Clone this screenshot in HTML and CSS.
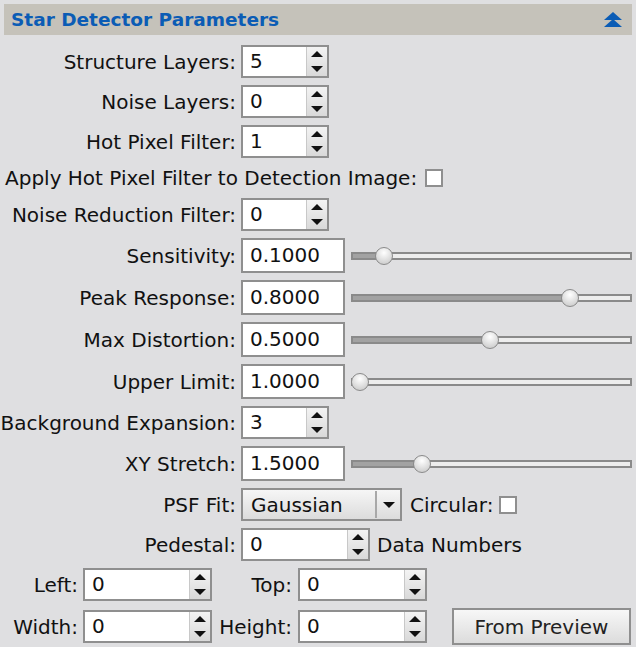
FILE: index.html
```html
<!DOCTYPE html>
<html>
<head>
<meta charset="utf-8">
<link rel="stylesheet" href="styles.css">
</head>
<body>
<div class="panel">
  <div class="header">
    <span class="title">Star Detector Parameters</span>
    <svg class="collapse" width="18" height="16" viewBox="0 0 18 16"><path d="M9 0 L18 8 L0 8 Z M9 7 L18 15 L0 15 Z" fill="#0b5cb5"/></svg>
  </div>
  <div class="form">
    <div class="row">
      <span class="lbl">Structure Layers:</span>
      <div class="spin s88"><span class="val">5</span><span class="arrows"><i class="up"></i><i class="dn"></i></span></div>
    </div>
    <div class="row">
      <span class="lbl">Noise Layers:</span>
      <div class="spin s88"><span class="val">0</span><span class="arrows"><i class="up"></i><i class="dn"></i></span></div>
    </div>
    <div class="row">
      <span class="lbl">Hot Pixel Filter:</span>
      <div class="spin s88"><span class="val">1</span><span class="arrows"><i class="up"></i><i class="dn"></i></span></div>
    </div>
    <div class="row row-check">
      <span class="lbl-free">Apply Hot Pixel Filter to Detection Image:</span>
      <span class="check"></span>
    </div>
    <div class="row">
      <span class="lbl">Noise Reduction Filter:</span>
      <div class="spin s88"><span class="val">0</span><span class="arrows"><i class="up"></i><i class="dn"></i></span></div>
    </div>
    <div class="row row-edit">
      <span class="lbl">Sensitivity:</span>
      <div class="edit">0.1000</div>
      <div class="slider"><div class="fill" style="width: 33px"></div><div class="thumb" style="left: 24px"></div></div>
    </div>
    <div class="row row-edit">
      <span class="lbl">Peak Response:</span>
      <div class="edit">0.8000</div>
      <div class="slider"><div class="fill" style="width: 219px"></div><div class="thumb" style="left: 210px"></div></div>
    </div>
    <div class="row row-edit">
      <span class="lbl">Max Distortion:</span>
      <div class="edit">0.5000</div>
      <div class="slider"><div class="fill" style="width: 139px"></div><div class="thumb" style="left: 130px"></div></div>
    </div>
    <div class="row row-edit">
      <span class="lbl">Upper Limit:</span>
      <div class="edit">1.0000</div>
      <div class="slider"><div class="fill" style="width: 9px"></div><div class="thumb" style="left: 0px"></div></div>
    </div>
    <div class="row">
      <span class="lbl">Background Expansion:</span>
      <div class="spin s88"><span class="val">3</span><span class="arrows"><i class="up"></i><i class="dn"></i></span></div>
    </div>
    <div class="row row-edit">
      <span class="lbl">XY Stretch:</span>
      <div class="edit">1.5000</div>
      <div class="slider"><div class="fill" style="width: 71px"></div><div class="thumb" style="left: 62px"></div></div>
    </div>
    <div class="row">
      <span class="lbl">PSF Fit:</span>
      <div class="combo"><span class="combo-text">Gaussian</span><span class="combo-btn"><i class="dn"></i></span></div>
      <span class="after">Circular:</span>
      <span class="check"></span>
    </div>
    <div class="row">
      <span class="lbl">Pedestal:</span>
      <div class="spin s129"><span class="val">0</span><span class="arrows"><i class="up"></i><i class="dn"></i></span></div>
      <span class="after2">Data Numbers</span>
    </div>
    <div class="row">
      <span class="lbl-a">Left:</span>
      <div class="spin s129"><span class="val">0</span><span class="arrows"><i class="up"></i><i class="dn"></i></span></div>
      <span class="lbl-b">Top:</span>
      <div class="spin s129"><span class="val">0</span><span class="arrows"><i class="up"></i><i class="dn"></i></span></div>
    </div>
    <div class="row row-last">
      <span class="lbl-a">Width:</span>
      <div class="spin s129"><span class="val">0</span><span class="arrows"><i class="up"></i><i class="dn"></i></span></div>
      <span class="lbl-b">Height:</span>
      <div class="spin s129"><span class="val">0</span><span class="arrows"><i class="up"></i><i class="dn"></i></span></div>
      <div class="button">From Preview</div>
    </div>
  </div>
</div>
</body>
</html>
```

FILE: styles.css
```css
html, body {
  margin: 0;
  padding: 0;
  background: #dfdfe1;
}
body {
  font-family: "DejaVu Sans", "Open Sans", sans-serif;
  font-size: 20px;
  color: #111;
  width: 636px;
  height: 647px;
  overflow: hidden;
}
.panel {
  padding: 4px 4px 0 4px;
}
.header {
  height: 31px;
  background: #c5c2ba;
  display: flex;
  align-items: center;
  justify-content: space-between;
  padding: 0 10px 0 7px;
}
.title {
  color: #0b5cb5;
  font-weight: bold;
  font-size: 18.5px;
}
.collapse {
  display: block;
}
.form {
  margin-left: -4px;
  margin-right: -4px;
  padding-top: 10px;
  display: flex;
  flex-direction: column;
  gap: 7px;
}
.row {
  display: flex;
  align-items: center;
  height: 33px;
}
.row-edit {
  height: 35px;
}
.row-check {
  height: 26px;
}
.row-last {
  height: 37px;
}
.lbl {
  width: 236px;
  text-align: right;
  margin-right: 5px;
  white-space: nowrap;
}
.lbl-free {
  margin-left: 5px;
  margin-right: 8px;
  white-space: nowrap;
}
.lbl-a {
  width: 78px;
  text-align: right;
  margin-right: 5px;
}
.lbl-b {
  width: 80px;
  text-align: right;
  margin-right: 6px;
}
.spin {
  box-sizing: border-box;
  height: 33px;
  border: 2px solid #8f8f8f;
  background: #fff;
  display: flex;
}
.s88 { width: 88px; }
.s129 { width: 129px; }
.val {
  flex: 1;
  padding-left: 7px;
  line-height: 29px;
}
.arrows {
  width: 20px;
  display: flex;
  flex-direction: column;
  background: linear-gradient(#f3f3f3, #d9d9d9);
  border-left: 1px solid #c8c8c8;
}
.arrows i {
  flex: 1;
  display: flex;
  align-items: center;
  justify-content: center;
}
.up::before {
  content: "";
  border-left: 6px solid transparent;
  border-right: 6px solid transparent;
  border-bottom: 6px solid #111;
}
.dn::before {
  content: "";
  border-left: 6px solid transparent;
  border-right: 6px solid transparent;
  border-top: 6px solid #111;
}
.edit {
  box-sizing: border-box;
  width: 104px;
  height: 35px;
  border: 2px solid #8f8f8f;
  background: #fff;
  padding-left: 7px;
  line-height: 31px;
}
.slider {
  position: relative;
  box-sizing: border-box;
  margin-left: 6px;
  width: 281px;
  height: 8px;
  border: 2px solid #8a8a8a;
  background: #ededed;
}
.fill {
  height: 100%;
  background: #a2a2a2;
}
.thumb {
  position: absolute;
  top: -7px;
  width: 16px;
  height: 16px;
  margin-left: -2px;
  border: 1px solid #8a8a8a;
  border-radius: 50%;
  background: radial-gradient(circle at 50% 30%, #ffffff, #d2d2d2 75%);
}
.check {
  box-sizing: border-box;
  width: 18px;
  height: 18px;
  border: 2px solid #8f8f8f;
  background: #fff;
}
.combo {
  box-sizing: border-box;
  width: 161px;
  height: 33px;
  border: 2px solid #8f8f8f;
  background: linear-gradient(#f6f6f6, #dcdcdc);
  display: flex;
  align-items: center;
}
.combo-text {
  flex: 1;
  padding-left: 8px;
}
.combo-btn {
  width: 23px;
  height: 27px;
  border-left: 2px solid #a8a8a8;
  display: flex;
  align-items: center;
  justify-content: center;
}
.combo-btn .dn {
  display: flex;
}
.after {
  margin-left: 8px;
  margin-right: 6px;
}
.after2 {
  margin-left: 7px;
}
.button {
  box-sizing: border-box;
  margin-left: 25px;
  width: 179px;
  height: 37px;
  border: 2px solid #8f8f8f;
  background: linear-gradient(#f7f7f7, #dcdcdc);
  display: flex;
  align-items: center;
  justify-content: center;
  color: #222;
}
```
